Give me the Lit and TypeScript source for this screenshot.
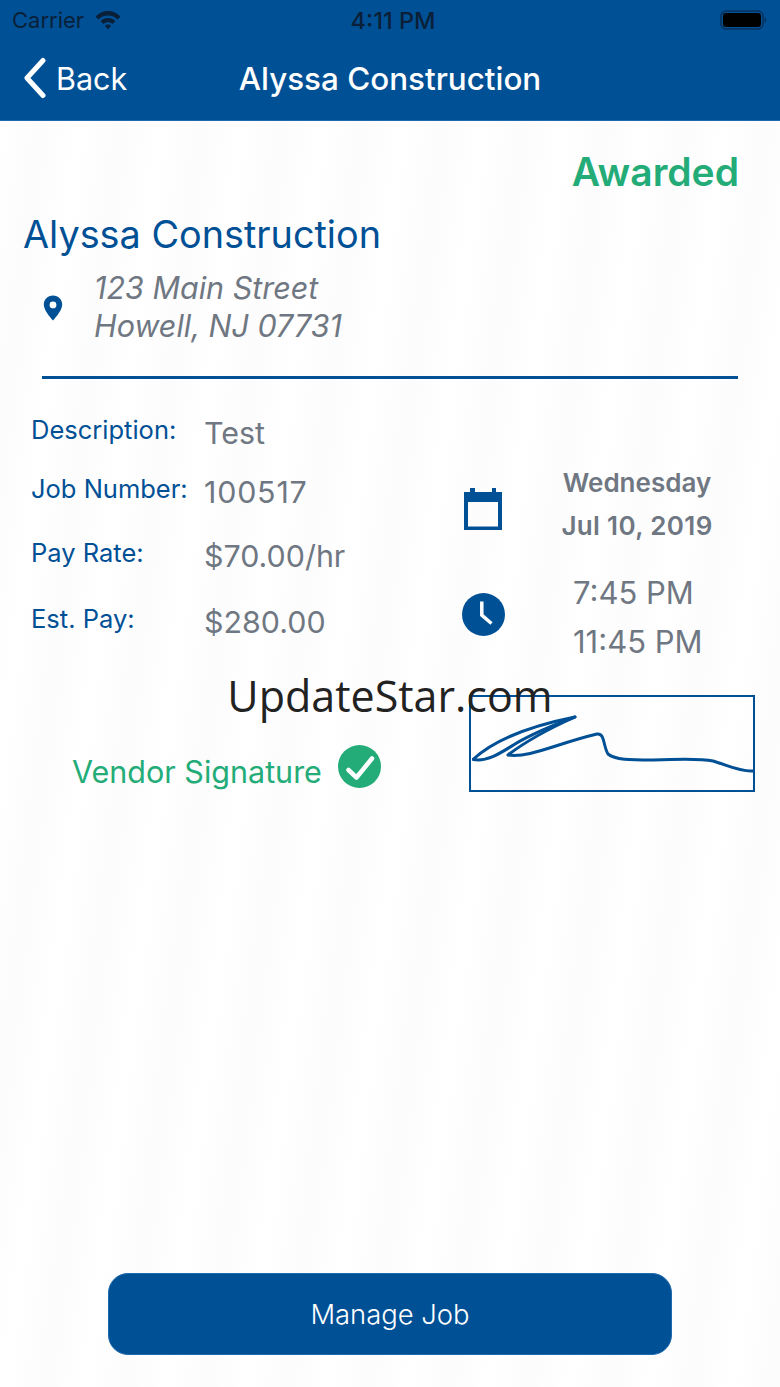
import {LitElement, html, css} from 'lit';
import {customElement} from 'lit/decorators.js';

const rows = [
  {label: 'Description:', value: 'Test', cls: 'r1'},
  {label: 'Job Number:', value: '100517', cls: 'r2'},
  {label: 'Pay Rate:', value: '$70.00/hr', cls: 'r3'},
  {label: 'Est. Pay:', value: '$280.00', cls: 'r4'},
];

@customElement('app-root')
export class AppRoot extends LitElement {

  static styles = css`
    :host {
      --blue: #005096;
      --grey: #6f7782;
      --green: #23ac78;
      display: flex;
      flex-direction: column;
      position: relative;
      width: 780px;
      height: 1387px;
      overflow: hidden;
      font-family: Inter, "Liberation Sans", sans-serif;
      background: #fff;
    }

    header {
      height: 121px;
      flex: none;
      box-sizing: border-box;
      border-bottom: 1px solid #1f6aad;
      background: var(--blue);
      display: flex;
      flex-direction: column;
    }

    .status {
      height: 40px;
      display: grid;
      grid-template-columns: 1fr auto 1fr;
      align-items: center;
      padding: 0 14px 0 12px;
      font-size: 22px;
      color: #0a2038;
    }
    .status .left { display: flex; align-items: center; gap: 11px; }
    .status .time { margin-left: 8px; font-size: 23.5px; font-weight: 500; }
    .status .right { display: flex; justify-content: flex-end; }

    .nav {
      flex: 1;
      position: relative;
      display: flex;
      align-items: center;
      justify-content: center;
      color: #fff;
    }
    .back {
      position: absolute;
      left: 23px;
      top: 17px;
      display: flex;
      align-items: center;
      gap: 7px;
      font-size: 30.5px;
    }
    .nav h1 {
      margin: 0 0 3px;
      font-size: 31.4px;
      font-weight: 500;
    }

    main {
      flex: 1;
      display: flex;
      flex-direction: column;
      background:
        repeating-linear-gradient(97deg, #fff 0, #fcfcfc 40px, #fff 80px);
    }

    .award {
      margin: 29px 41px 0 0;
      text-align: right;
      font-size: 39px;
      line-height: 44px;
      font-weight: 600;
      color: var(--green);
    }

    .title {
      margin: 18px 0 0 23px;
      font-size: 37.8px;
      line-height: 44px;
      font-weight: 400;
      color: var(--blue);
    }

    .address {
      display: flex;
      align-items: center;
      margin: 13px 0 0 43px;
      gap: 31px;
      font-size: 30.5px;
      line-height: 38px;
      font-style: italic;
      color: var(--grey);
    }
    .address svg { margin-top: 2px; }

    .divider {
      height: 3px;
      margin: 31px 42px 0;
      background: var(--blue);
    }

    .info {
      display: grid;
      grid-template-columns: 433px 1fr;
    }

    .fields { padding: 34px 0 0 31px; }
    .field {
      display: grid;
      grid-template-columns: 173px 1fr;
      align-items: start;
      height: 40px;
    }
    .field .k { font-size: 25.5px; line-height: 34px; color: var(--blue); }
    .field .v { font-size: 30.4px; line-height: 40px; color: var(--grey); }
    .r1 { margin-bottom: 19px; }
    .r2 { margin-bottom: 24px; }
    .r2 .v { letter-spacing: 0.8px; }
    .r3 { margin-bottom: 26px; }

    .when { padding: 82px 0 0 0; }
    .date, .hours {
      display: grid;
      grid-template-columns: 100px 1fr;
      align-items: center;
    }
    .date svg, .hours svg { justify-self: center; }
    .date svg { margin-top: 9px; }
    .hours svg { margin-bottom: 6px; }
    .date .txt {
      width: 200px;
      margin-left: 4px;
      text-align: center;
      font-size: 26px;
      line-height: 43px;
      font-weight: 600;
      color: var(--grey);
    }
    .date .day { letter-spacing: 0.35px; }
    .hours { margin-top: 21px; }
    .hours .txt {
      padding-left: 40px;
      font-size: 31px;
      line-height: 49px;
      color: var(--grey);
    }

    .sign {
      display: flex;
      align-items: flex-end;
      margin-top: 29px;
      padding-left: 72px;
    }
    .sign .lbl { margin-bottom: 2px; font-size: 30.5px; color: var(--green); }
    .sign .tick { margin: 0 0 4px 16px; }
    .sign .box {
      width: 286px;
      height: 97px;
      margin-left: 88px;
      border: 2px solid var(--blue);
      box-sizing: border-box;
    }
    .sign .box svg { display: block; }

    .action {
      width: 564px;
      height: 82px;
      margin: auto auto 32px;
      padding: 0;
      border: 1px solid #1f6aad;
      border-radius: 20px;
      background: var(--blue);
      color: #fff;
      font: 300 27.4px Inter, "Liberation Sans", sans-serif;
    }

    .mark {
      position: absolute;
      left: 0;
      right: 0;
      top: 666px;
      text-align: center;
      font-family: "Open Sans", sans-serif;
      font-size: 43px;
      line-height: 60px;
      color: #222;
    }
  `;

  render() {
    return html`
      <header>
        <div class="status">
          <div class="left">
            <span>Carrier</span>
            <svg width="26" height="20" viewBox="0 0 26 20" fill="#0a2038">
              <path d="M13 1C8 1 4 3 .5 6.500l2.900 3C6 7 9.300 5.500 13 5.500s7 1.500 9.600 4l2.900-3C22 3 18 1 13 1z"/>
              <path d="M13 8c-2.900 0-5.500 1.100-7.400 3l2.800 3C9.600 12.800 11.200 12.200 13 12.200s3.400.6 4.600 1.800l2.800-3C18.500 9.100 15.900 8 13 8z"/>
              <path d="M13 14.500c-1.200 0-2.200.4-3 1.200l3 3.800 3-3.800c-.8-.8-1.800-1.200-3-1.200z"/>
            </svg>
          </div>
          <div class="time">4:11 PM</div>
          <div class="right">
            <svg width="46" height="20" viewBox="0 0 46 20">
              <rect x="1" y="1" width="42" height="18" rx="5" fill="none" stroke="#08305c" stroke-width="1.500"/>
              <rect x="3" y="3" width="38" height="14" rx="3" fill="#000"/>
              <path d="M44.500 7v6c1-.3 1.500-1.500 1.500-3s-.5-2.700-1.500-3z" fill="#08305c"/>
            </svg>
          </div>
        </div>
        <div class="nav">
          <div class="back">
            <svg width="26" height="42" viewBox="0 0 26 42" fill="none" stroke="#fff" stroke-width="5" stroke-linecap="round" stroke-linejoin="round">
              <path d="M20 3.500 4 21l16 17.500"/>
            </svg>
            <span>Back</span>
          </div>
          <h1>Alyssa Construction</h1>
        </div>
      </header>

      <main>
        <div class="award">Awarded</div>
        <div class="title">Alyssa Construction</div>
        <div class="address">
          <svg width="20" height="26" viewBox="0 0 20 26">
            <path fill="#005096" fill-rule="evenodd" d="M10 .5C4.700.5.800 4.500.8 9.500c0 5.500 5.700 12 9.200 16 3.500-4 9.200-10.500 9.200-16C19.200 4.500 15.300.5 10 .5zm0 6a3.400 3.400 0 1 1 0 6.800 3.400 3.400 0 0 1 0-6.800z"/>
          </svg>
          <div>123 Main Street<br>Howell, NJ 07731</div>
        </div>
        <div class="divider"></div>

        <div class="info">
          <div class="fields">
            ${rows.map((r) => html`
              <div class="field ${r.cls}">
                <span class="k">${r.label}</span>
                <span class="v">${r.value}</span>
              </div>
            `)}
          </div>
          <div class="when">
            <div class="date">
              <svg width="38" height="42" viewBox="0 0 38 42">
                <path fill="#005096" fill-rule="evenodd" d="M6 0h5v4h17V0h4v4h6v38H0V4h6V0zM4 14v24.500h30V14H4z"/>
              </svg>
              <div class="txt">Wednesday<br><span class="day">Jul 10, 2019</span></div>
            </div>
            <div class="hours">
              <svg width="43" height="43" viewBox="0 0 43 43">
                <circle cx="21.500" cy="21.500" r="21.500" fill="#005096"/>
                <path d="M19.800 8.500v13.700l9.700 8.300" fill="none" stroke="#fff" stroke-width="3.500"/>
              </svg>
              <div class="txt">7:45 PM<br>11:45 PM</div>
            </div>
          </div>
        </div>

        <div class="sign">
          <span class="lbl">Vendor Signature</span>
          <svg class="tick" width="43" height="43" viewBox="0 0 43 43">
            <circle cx="21.500" cy="21.500" r="21.500" fill="#23ac78"/>
            <path d="M10.500 25l8 7.500L34 13.500" fill="none" stroke="#fff" stroke-width="4.500" stroke-linecap="round" stroke-linejoin="round"/>
          </svg>
          <div class="box">
            <svg width="282" height="93" viewBox="1 1 282 93" fill="none" stroke="#005096" stroke-width="3" stroke-linecap="round" stroke-linejoin="round">
              <path d="M3.500 63C20 48 50 32 105 21 85 30 60 42 38 59c22 3 47-11 89-21 8-1 6 12 11 20 7 6 22 6 45 6 22-1 47-2 60 1 14 4 25 10 38 10h3"/>
              <path d="M3.500 63.500C18 66 32 56 45 48S85 28 105 21"/>
            </svg>
          </div>
        </div>

        <button class="action">Manage Job</button>
      </main>

      <div class="mark">UpdateStar.com</div>
    `;
  }
}
